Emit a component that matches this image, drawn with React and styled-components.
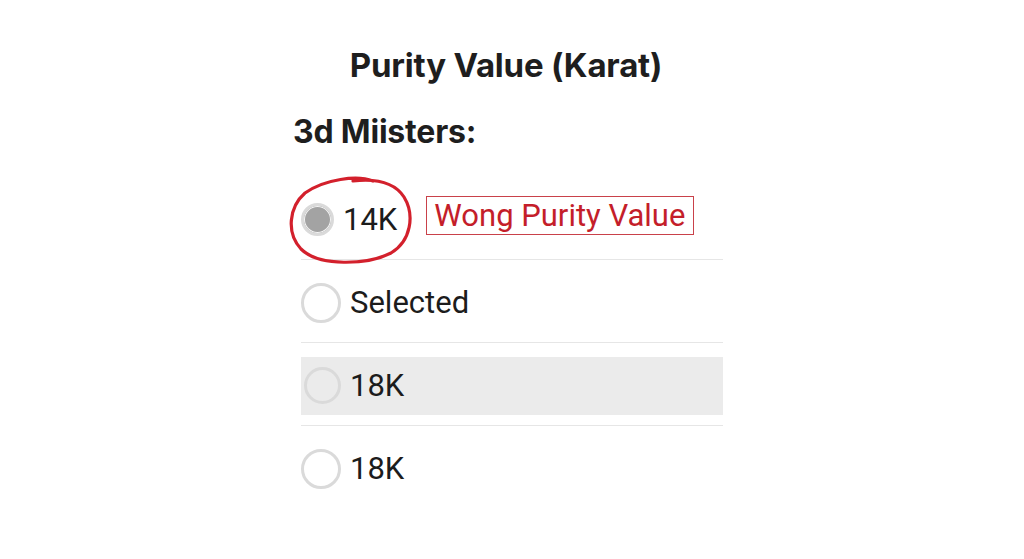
import React from "react";
import styled, { createGlobalStyle } from "styled-components";

const Global = createGlobalStyle`
  html, body { margin: 0; padding: 0; background: #ffffff; }
  body { font-family: Roboto, "Noto Sans", "Liberation Sans", sans-serif; color: #1c1c1c; }
`;

const Page = styled.main`
  width: 1024px;
  height: 559px;
  display: flex;
  flex-direction: column;
  align-items: center;
  box-sizing: border-box;
  padding-top: 44px;
`;

const Column = styled.section`
  width: 422px;
  display: flex;
  flex-direction: column;
`;

const Title = styled.h1`
  margin: 0;
  font-family: Inter, Roboto, sans-serif;
  font-size: 33px;
  line-height: 42px;
  font-weight: 700;
  text-align: center;
  padding-right: 12px;
  color: #1e1e1e;
  letter-spacing: -0.2px;
`;

const Subtitle = styled.h2`
  margin: 26px 0 0 -8px;
  font-family: Inter, Roboto, sans-serif;
  font-size: 32px;
  line-height: 40px;
  font-weight: 700;
  color: #1e1e1e;
  letter-spacing: -0.2px;
`;

const List = styled.ul`
  list-style: none;
  margin: 25px 0 0;
  padding: 0;
  display: flex;
  flex-direction: column;
`;

const Row = styled.li`
  position: relative;
  height: 79px;
  padding-top: 3px;
  display: flex;
  align-items: center;
  border-bottom: 1px solid ${(p) => (p.$last ? "transparent" : "#e6e6e6")};
`;

const Highlight = styled.div`
  flex: 1;
  height: 58px;
  display: flex;
  align-items: center;
  background: #ebebeb;
  padding-left: 3px;
`;

const Radio = styled.span`
  flex: none;
  box-sizing: border-box;
  width: ${(p) => p.$size}px;
  height: ${(p) => p.$size}px;
  border-radius: 50%;
  border: 3px solid #dadada;
  background: ${(p) => (p.$filled ? "#a3a3a3" : "transparent")};
  box-shadow: ${(p) => (p.$filled ? "inset 0 0 0 1px #f4f4f4" : "none")};
`;

const Label = styled.span`
  margin-left: ${(p) => p.$gap ?? 9}px;
  font-size: 31px;
  line-height: 36px;
  color: #1c1c1c;
`;

const ErrorTag = styled.span`
  margin-left: 29px;
  margin-top: -8px;
  border: 1.5px solid #c9414a;
  color: #c41e2a;
  font-size: 31px;
  line-height: 35px;
  padding: 1px 8px 1px 7px;
`;

const Scribble = styled.svg`
  position: absolute;
  left: -14px;
  top: -2px;
  width: 130px;
  height: 92px;
  pointer-events: none;
  overflow: visible;
`;

export default function App() {
  return (
    <>
      <Global />
      <Page>
        <Column>
          <Title>Purity Value (Karat)</Title>
          <Subtitle>3d Miisters:</Subtitle>
          <List>
            <Row>
              <Radio $size={33} $filled />
              <Label $gap={9}>14K</Label>
              <ErrorTag>Wong Purity Value</ErrorTag>
              <Scribble viewBox="0 0 130 92">
                <path
                  d="M 86 6 C 70 0, 38 4, 18 18 C 2 32, -1 58, 14 74 C 32 92, 80 90, 104 78 C 124 66, 128 40, 117 22 C 108 8, 92 3, 66 6"
                  fill="none"
                  stroke="#d3202c"
                  strokeWidth="3.2"
                  strokeLinecap="round"
                />
              </Scribble>
            </Row>
            <Row>
              <Radio $size={40} />
              <Label $gap={9}>Selected</Label>
            </Row>
            <Row>
              <Highlight>
                <Radio $size={37} />
                <Label $gap={9}>18K</Label>
              </Highlight>
            </Row>
            <Row $last>
              <Radio $size={40} />
              <Label $gap={9}>18K</Label>
            </Row>
          </List>
        </Column>
      </Page>
    </>
  );
}
